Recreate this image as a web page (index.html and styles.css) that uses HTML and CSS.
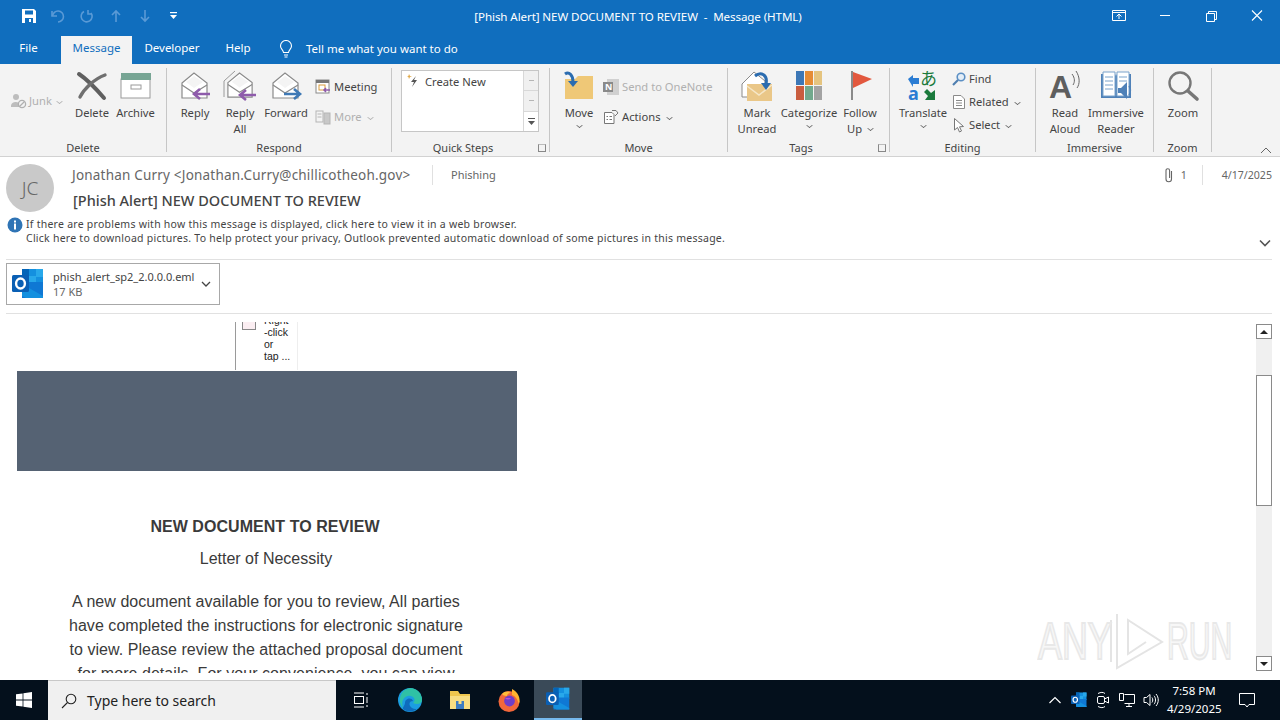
FILE: index.html
```html
<!DOCTYPE html>
<html lang="en">
  <head>
    <meta charset="UTF-8" />
    <meta name="viewport" content="width=device-width, initial-scale=1.0" />
    <title>[Phish Alert] NEW DOCUMENT TO REVIEW - Message (HTML)</title>
    <link rel="stylesheet" href="styles.css">
  </head>
  <body>
    <svg class="defs" width="0" height="0">
      <symbol id="env" viewBox="0 0 32 32">
        <path d="M3 12 L15 2 L28 12 V27 H3 Z" fill="#fff" stroke="#8a8a8a" stroke-width="1.2"/>
        <path d="M3 14 L15 22 L28 14" fill="none" stroke="#8a8a8a" stroke-width="1.2"/>
        <path d="M7 11 L15 5 L24 11 L15 17 Z" fill="#f4f4f4"/>
      </symbol>
      <symbol id="outlook" viewBox="0 0 32 32">
        <rect x="10" y="1" width="21" height="15" fill="#1490df"/>
        <rect x="10" y="1" width="7" height="8" fill="#0364b8"/>
        <rect x="24" y="1" width="7" height="8" fill="#28a8ea"/>
        <rect x="17" y="8" width="7" height="8" fill="#28a8ea"/>
        <path d="M10 14 H31 V30 H10 Z" fill="#0f78d4"/>
        <path d="M10 16 L31 28 V30 H14 L10 28 Z" fill="#1490df"/>
        <rect x="0" y="7" width="17" height="17" rx="1.5" fill="#0a5fb4"/>
        <ellipse cx="8.5" cy="15.5" rx="4.4" ry="5" fill="none" stroke="#fff" stroke-width="2.4"/>
      </symbol>
    </svg>

    <header class="titlebar">
      <div class="qat">
        <svg class="qat-save" width="16" height="16" viewBox="0 0 16 16"><path d="M1 1 H13 L15 3 V15 H1 Z" fill="#fff"/><rect x="4" y="2.5" width="8" height="4" fill="#106ebe"/><rect x="4" y="10" width="8" height="5" fill="#106ebe"/><rect x="8" y="11" width="2" height="3" fill="#fff"/></svg>
        <svg width="16" height="16" viewBox="0 0 16 16" fill="none" stroke="#5a9ad6" stroke-width="1.6"><path d="M2 3 V8 H7"/><path d="M2.5 8 A5.5 5.5 0 1 1 8 14"/></svg>
        <svg width="16" height="16" viewBox="0 0 16 16" fill="none" stroke="#5a9ad6" stroke-width="1.6"><path d="M9 2 V6 H13"/><path d="M12 5 A5.5 5.5 0 1 1 5 3.5"/></svg>
        <svg width="16" height="16" viewBox="0 0 16 16" fill="none" stroke="#5a9ad6" stroke-width="1.6"><path d="M8 14 V3 M4 7 L8 3 L12 7"/></svg>
        <svg width="16" height="16" viewBox="0 0 16 16" fill="none" stroke="#5a9ad6" stroke-width="1.6"><path d="M8 2 V13 M4 9 L8 13 L12 9"/></svg>
        <svg width="16" height="16" viewBox="0 0 16 16" fill="#fff"><rect x="4" y="4" width="7" height="1.2"/><path d="M4 7 H11 L7.5 11 Z"/></svg>
      </div>
      <div class="title">[Phish Alert] NEW DOCUMENT TO REVIEW &nbsp;-&nbsp; Message (HTML)</div>
      <div class="winbtns">
        <svg width="46" height="14" viewBox="0 0 46 14" fill="none" stroke="#fff"><path d="M16.5 1.5 H29.5 V11.5 H16.5 Z"/><path d="M16.5 3.5 H29.5"/><path d="M23 10 V5.5 M20.5 7.5 L23 5 L25.5 7.5"/></svg>
        <svg width="46" height="14" viewBox="0 0 46 14" fill="none" stroke="#fff"><path d="M18 6.5 H28"/></svg>
        <svg width="46" height="14" viewBox="0 0 46 14" fill="none" stroke="#fff"><path d="M18.5 4.5 H26.5 V12.5 H18.5 Z"/><path d="M20.5 4.5 V2.5 H28.5 V10.5 H26.5"/></svg>
        <svg width="46" height="14" viewBox="0 0 46 14" fill="none" stroke="#fff" stroke-width="1.1"><path d="M18 1.5 L28 11.5 M28 1.5 L18 11.5"/></svg>
      </div>
    </header>

    <nav class="tabs">
      <span class="tab tab-file">File</span>
      <span class="tab tab-active">Message</span>
      <span class="tab tab-dev">Developer</span>
      <span class="tab tab-help">Help</span>
      <svg class="bulb" width="16" height="18" viewBox="0 0 16 18" fill="none" stroke="#fff" stroke-width="1.1"><path d="M5.5 12.5 C5 9.5 2.5 9 2.5 6 A5.5 5.5 0 0 1 13.5 6 C13.5 9 11 9.5 10.5 12.5 Z"/><path d="M6 15 H10 M6.5 17 H9.5"/></svg>
      <span class="tell">Tell me what you want to do</span>
    </nav>

    <section class="ribbon">
      <div class="group g-delete">
        <div class="group-body">
          <div class="junk">
            <svg width="16" height="16" viewBox="0 0 16 16"><circle cx="5" cy="4" r="3" fill="#bdbdbd"/><path d="M0 13 C0 8 9 8 9 12 V14 H0 Z" fill="#bdbdbd"/><circle cx="11" cy="11" r="3.6" fill="#f3f3f3" stroke="#b0b0b0" stroke-width="1.3"/><path d="M8.5 13.5 L13.5 8.5" stroke="#b0b0b0" stroke-width="1.3"/></svg>
            <span>Junk</span><i class="caret caret-dim"></i>
          </div>
          <div class="big w-delete">
            <svg class="big-icon" width="32" height="32" viewBox="0 0 32 32" fill="none" stroke-linecap="round"><path d="M3 3 C12 9 22 20 28 27" stroke="#5f5f5f" stroke-width="4"/><path d="M29 4 C18 8 8 18 4 26" stroke="#6f6f6f" stroke-width="3.4"/></svg>
            <span>Delete</span>
          </div>
          <div class="big w-archive">
            <svg class="big-icon" width="32" height="32" viewBox="0 0 32 32"><rect x="1" y="8" width="29" height="19" fill="#fff" stroke="#9a9a9a"/><rect x="1" y="2" width="30" height="7" fill="#77a594"/><rect x="11" y="14" width="10" height="4" fill="none" stroke="#9a9a9a"/></svg>
            <span>Archive</span>
          </div>
        </div>
        <div class="group-label">Delete</div>
      </div>

      <div class="group g-respond">
        <div class="group-body">
          <div class="big w-reply">
            <svg class="big-icon" width="32" height="32"><use href="#env"/><path d="M31 23 H16 M21 18 L15 23 L21 28" fill="none" stroke="#8e5bab" stroke-width="2.6"/></svg>
            <span>Reply</span>
          </div>
          <div class="big w-replyall">
            <svg class="big-icon" width="32" height="32" viewBox="0 0 32 32"><path d="M0 10 L11 0 M0 10 V26" fill="none" stroke="#9a9a9a"/><svg x="1" y="0" width="31" height="31"><use href="#env"/></svg><path d="M32 24 H17 M22 19 L16 24 L22 29" fill="none" stroke="#8e5bab" stroke-width="2.6"/></svg>
            <span>Reply<br>All</span>
          </div>
          <div class="big w-forward">
            <svg class="big-icon" width="32" height="32"><use href="#env"/><path d="M14 23 H29 M24 18 L30 23 L24 28" fill="none" stroke="#3f79b5" stroke-width="2.6"/></svg>
            <span>Forward</span>
          </div>
          <div class="stack stack-respond">
            <div class="small">
              <svg width="16" height="16" viewBox="0 0 16 16"><rect x="1" y="1" width="13" height="13" fill="#fff" stroke="#8a8a8a"/><rect x="1" y="1" width="13" height="3" fill="#777"/><rect x="4" y="6" width="6" height="5" fill="none" stroke="#d99b3a"/><path d="M15 11 H9 M11 9 L9 11 L11 13" stroke="#8e5bab" stroke-width="1.5" fill="none"/></svg>
              <span>Meeting</span>
            </div>
            <div class="small dim">
              <svg width="16" height="16" viewBox="0 0 16 16" fill="none" stroke="#b5b5b5"><rect x="1" y="2" width="7" height="11"/><path d="M2.5 5 H6.5 M2.5 8 H6.5"/><rect x="9" y="4" width="6" height="11" fill="#c8c8c8"/></svg>
              <span>More</span><i class="caret caret-dim"></i>
            </div>
          </div>
        </div>
        <div class="group-label">Respond</div>
      </div>

      <div class="group g-quick">
        <div class="group-body">
          <div class="quick">
            <div class="quick-list">
              <svg width="14" height="14" viewBox="0 0 14 14"><path d="M9 2 L4 8 H7 L5 13 L10 6 H7 Z" fill="#555"/><path d="M2 0 L3 2 L5 2.5 L3 3 L2 5 L1.4 3 L0 2.5 L1.4 2 Z" fill="#e0a94a"/></svg>
              <span>Create New</span>
            </div>
            <div class="quick-arrows">
              <b class="qa"><i class="mini-up"></i></b>
              <b class="qa"><i class="mini-down"></i></b>
              <b class="qa qa-last"><svg width="9" height="9" viewBox="0 0 9 9" fill="#555"><rect x="1" y="1" width="7" height="1"/><path d="M1 4 H8 L4.5 8 Z"/></svg></b>
            </div>
          </div>
        </div>
        <div class="group-label label-launch">Quick Steps<i class="launcher"></i></div>
      </div>

      <div class="group g-move">
        <div class="group-body">
          <div class="big w-move">
            <svg class="big-icon" width="32" height="32" viewBox="0 0 32 32"><path d="M2 8 H12 L15 5 H30 V28 H2 Z" fill="#efc877"/><path d="M2 3 C6 0 10 4 10 11" fill="none" stroke="#2b6cb0" stroke-width="3"/><path d="M5 10 L10 16 L15 10 Z" fill="#2b6cb0"/></svg>
            <span>Move</span>
            <i class="caret"></i>
          </div>
          <div class="stack stack-move">
            <div class="small dim">
              <svg width="16" height="16" viewBox="0 0 16 16"><rect x="4" y="0" width="12" height="16" fill="#d0d0d0"/><rect x="0" y="3" width="10" height="10" fill="#8a8a8a"/><text class="n-glyph" x="2" y="11">N</text></svg>
              <span>Send to OneNote</span>
            </div>
            <div class="small">
              <svg width="16" height="16" viewBox="0 0 16 16" fill="none" stroke="#777"><path d="M1.5 3.5 H9 L11 5.5 V14.5 H1.5 Z" fill="#fff"/><path d="M3.5 7.5 H5 M6.5 7.5 H9 M3.5 10.5 H5 M6.5 10.5 H9"/><path d="M9 1.5 H13 L15 4 L12 7"/></svg>
              <span>Actions</span><i class="caret"></i>
            </div>
          </div>
        </div>
        <div class="group-label">Move</div>
      </div>

      <div class="group g-tags">
        <div class="group-body">
          <div class="big w-unread">
            <svg class="big-icon" width="32" height="32" viewBox="0 0 32 32"><path d="M1 13 L13 1 L24 10 V26 H1 Z" fill="#fff" stroke="#8a8a8a"/><path d="M7 15 H32 V32 H7 Z" transform="translate(-1 -2)" fill="#eac788"/><path d="M6 15 L18 24 L31 14" fill="none" stroke="#f6e7c8" stroke-width="1.5"/><path d="M14 5 C20 0 27 4 25 13" fill="none" stroke="#2b6cb0" stroke-width="3"/><path d="M20 12 L25 19 L30 12 Z" fill="#2b6cb0"/></svg>
            <span>Mark<br>Unread</span>
          </div>
          <div class="big w-categorize">
            <svg class="big-icon" width="32" height="32" viewBox="0 0 32 32"><rect x="3" y="0" width="8" height="14" fill="#3c77b6"/><rect x="12" y="0" width="8" height="14" fill="#e58c35"/><rect x="21" y="0" width="8" height="14" fill="#e5c47f"/><rect x="3" y="15" width="8" height="14" fill="#c95d3f"/><rect x="12" y="15" width="8" height="14" fill="#72a98d"/><rect x="21" y="15" width="8" height="14" fill="#a3a3a3"/></svg>
            <span>Categorize</span>
            <i class="caret"></i>
          </div>
          <div class="big w-follow">
            <svg class="big-icon" width="32" height="32" viewBox="0 0 32 32"><rect x="7" y="0" width="2" height="29" fill="#8a8a8a"/><path d="M9 1 L28 8 L9 17 Z" fill="#e2583e"/></svg>
            <span>Follow<br>Up <i class="caret caret-inline"></i></span>
          </div>
        </div>
        <div class="group-label label-launch">Tags<i class="launcher"></i></div>
      </div>

      <div class="group g-editing">
        <div class="group-body">
          <div class="big w-translate">
            <svg class="big-icon" width="32" height="32" viewBox="0 0 32 32"><path d="M1 8 L6 4 V7 H12 V13 H6 V16 Z" fill="#2b7cd3"/><text class="tr-a" x="1" y="29">a</text><text class="tr-j" x="13" y="14">あ</text><path d="M28 29 L28 19 L24 22 L20 18 L17 21 L21 25 L18 29 Z" fill="#1b7a3c"/></svg>
            <span>Translate</span>
            <i class="caret"></i>
          </div>
          <div class="stack stack-edit">
            <div class="small">
              <svg width="14" height="14" viewBox="0 0 14 14" fill="none"><circle cx="9" cy="5" r="3.8" stroke="#5b8fc4" stroke-width="1.6" fill="#e4eef8"/><path d="M6 8 L1 13" stroke="#4f7fb0" stroke-width="2.2"/></svg>
              <span>Find</span>
            </div>
            <div class="small">
              <svg width="14" height="16" viewBox="0 0 14 16" fill="#fff" stroke="#8a8a8a"><path d="M1.5 1.5 H9 L12.5 5 V14.5 H1.5 Z"/><path d="M4 6.5 H10 M4 9 H10 M4 11.5 H10" fill="none"/></svg>
              <span>Related</span><i class="caret"></i>
            </div>
            <div class="small">
              <svg width="14" height="16" viewBox="0 0 14 16" fill="#fff" stroke="#777"><path d="M2.5 1.5 V13 L5.5 10.5 L7.5 15 L9.5 14 L7.5 9.8 L11.5 9.5 Z"/></svg>
              <span>Select</span><i class="caret"></i>
            </div>
          </div>
        </div>
        <div class="group-label">Editing</div>
      </div>

      <div class="group g-immersive">
        <div class="group-body">
          <div class="big w-read">
            <svg class="big-icon" width="32" height="32" viewBox="0 0 32 32"><text class="read-a" x="0" y="27">A</text><path d="M23 3 C26 7 26 11 24 14 M27 0 C31 6 31 13 28 17" fill="none" stroke="#666"/></svg>
            <span>Read<br>Aloud</span>
          </div>
          <div class="big w-immersive">
            <svg class="big-icon" width="32" height="32" viewBox="0 0 32 32"><path d="M1 3 H15 L16 5 L17 3 H31 V27 H1 Z" fill="#4f81b8"/><path d="M3 1 H15 V25 H3 Z M17 1 H29 V25 H17 Z" fill="#fff" stroke="#7ba3cc"/><path d="M5 6 H13 M5 10 H13 M5 14 H13 M5 18 H13 M19 6 H27 M19 10 H27" stroke="#7ba3cc"/><path d="M18 17 H21 L27 11 V28 L21 22 H18 Z" fill="#4f81b8"/><path d="M29 15 C31 18 31 21 29 24" fill="none" stroke="#4f81b8" stroke-width="1.4"/></svg>
            <span>Immersive<br>Reader</span>
          </div>
        </div>
        <div class="group-label">Immersive</div>
      </div>

      <div class="group g-zoom">
        <div class="group-body">
          <div class="big w-zoom">
            <svg class="big-icon" width="32" height="32" viewBox="0 0 32 32" fill="none" stroke="#777"><circle cx="13" cy="12" r="10.5" stroke-width="2.4"/><path d="M21 20 L30 28" stroke-width="3.6" stroke-linecap="round"/></svg>
            <span>Zoom</span>
          </div>
        </div>
        <div class="group-label">Zoom</div>
      </div>

      <svg class="collapse" width="14" height="8" viewBox="0 0 14 8" fill="none" stroke="#666"><path d="M2 7 L7 2 L12 7"/></svg>
    </section>

    <section class="msg-head">
      <div class="avatar">JC</div>
      <div class="head-main">
        <div class="head-row">
          <span class="sender">Jonathan Curry &lt;Jonathan.Curry@chillicotheoh.gov&gt;</span>
          <span class="tag">Phishing</span>
          <span class="head-right">
            <svg width="10" height="16" viewBox="0 0 10 16" fill="none" stroke="#666" stroke-width="1.1"><path d="M7.5 4 V12 A2.7 2.7 0 0 1 2 12 V3.5 A1.8 1.8 0 0 1 5.6 3.5 V11"/></svg>
            <span class="att-count">1</span>
            <span class="head-date">4/17/2025</span>
          </span>
        </div>
        <div class="subject">[Phish Alert] NEW DOCUMENT TO REVIEW</div>
      </div>
    </section>

    <section class="infobar">
      <svg class="info-icon" width="16" height="16" viewBox="0 0 16 16"><circle cx="8" cy="8" r="7.5" fill="#2f74b5"/><rect x="7" y="6.5" width="2" height="6" fill="#fff"/><rect x="7" y="3.5" width="2" height="2" fill="#fff"/></svg>
      <p class="info-text">If there are problems with how this message is displayed, click here to view it in a web browser.<br>Click here to download pictures. To help protect your privacy, Outlook prevented automatic download of some pictures in this message.</p>
      <svg class="info-chevron" width="12" height="8" viewBox="0 0 12 8" fill="none" stroke="#555" stroke-width="1.6"><path d="M1 1.5 L6 6.5 L11 1.5"/></svg>
    </section>

    <section class="attach-row">
      <div class="attach">
        <svg width="32" height="32"><use href="#outlook"/></svg>
        <div class="attach-text">
          <div class="attach-name">phish_alert_sp2_2.0.0.0.eml</div>
          <div class="attach-size">17 KB</div>
        </div>
        <svg class="attach-chevron" width="10" height="6" viewBox="0 0 10 6" fill="none" stroke="#444" stroke-width="1.3"><path d="M1 1 L5 5 L9 1"/></svg>
      </div>
    </section>

    <main class="body-wrap">
      <div class="mail">
        <div class="broken">
          <div class="broken-box">
            <i class="broken-icon"></i>
            <div class="broken-text">Right<br>-click<br>or<br>tap ...</div>
          </div>
        </div>
        <div class="banner"></div>
        <h1 class="mail-title">NEW DOCUMENT TO REVIEW</h1>
        <p class="mail-sub">Letter of Necessity</p>
        <p class="mail-text">A new document available for you to review, All parties<br>have completed the instructions for electronic signature<br>to view. Please review the attached proposal document<br>for more details. For your convenience, you can view</p>
      </div>
      <div class="scrollbar">
        <div class="sb-btn"><i class="sb-up"></i></div>
        <div class="sb-track-top"></div>
        <div class="sb-thumb"></div>
        <div class="sb-track"></div>
        <div class="sb-btn"><i class="sb-down"></i></div>
      </div>
      <div class="watermark">
        <span class="wm-any">ANY</span>
        <svg width="58" height="62" viewBox="0 0 58 62" fill="none" stroke="#e4e4e4" stroke-width="2"><path d="M3 10 V52 M9 4 V58 L54 32 L20 10 V44 L38 32"/></svg>
        <span class="wm-run">RUN</span>
      </div>
    </main>

    <footer class="taskbar">
      <div class="start">
        <svg width="16" height="16" viewBox="0 0 16 16" fill="#fff"><path d="M0 2.3 L6.6 1.4 V7.6 H0 Z M7.4 1.3 L16 0 V7.6 H7.4 Z M0 8.4 H6.6 V14.6 L0 13.7 Z M7.4 8.4 H16 V16 L7.4 14.7 Z"/></svg>
      </div>
      <div class="search">
        <svg width="16" height="16" viewBox="0 0 16 16" fill="none" stroke="#222" stroke-width="1.1"><circle cx="10" cy="6" r="4.8"/><path d="M6.5 9.5 L1 15"/></svg>
        <span>Type here to search</span>
      </div>
      <div class="task-icon">
        <svg width="16" height="16" viewBox="0 0 16 16" fill="none" stroke="#fff"><path d="M1 1 H11 M1 15 H11"/><rect x="1.5" y="4.5" width="9" height="7"/><path d="M14 1 V3 M14 5 V11 M14 13 V15"/></svg>
      </div>
      <div class="task-icon">
        <svg width="24" height="24" viewBox="0 0 24 24"><circle cx="12" cy="12" r="12" fill="#1b9de2"/><path d="M12 0 A12 12 0 0 1 24 12 C24 16 19 17 15 15 C19 12 15 7 10 8 C5 9 3 14 5 20 A12 12 0 0 1 12 0 Z" fill="#2fc1a5"/><path d="M7 15 C7 10 14 9 15 13 C11 13 10 17 14 20 C17 22 20 21 21 19 A12 12 0 0 1 6 22 C3 20 7 18 7 15 Z" fill="#0f6cbd"/></svg>
      </div>
      <div class="task-icon">
        <svg width="22" height="20" viewBox="0 0 22 20"><path d="M1 1 H9 L11 4 H21 V19 H1 Z" fill="#f0c64e"/><rect x="1" y="6" width="20" height="13" fill="#f9dd82"/><rect x="7" y="11" width="8" height="8" fill="#3e7cc2"/><rect x="9.5" y="11" width="3" height="3" fill="#f9dd82"/></svg>
      </div>
      <div class="task-icon">
        <svg width="24" height="24" viewBox="0 0 24 24"><circle cx="12" cy="13.5" r="10.5" fill="#f2673a"/><path d="M15 1 C21 4 24 10 22 16 C20 10 18 8 15 7 Z" fill="#ffb52e"/><path d="M5 6 C8 3 12 3 14 5 C11 5 10 7 10 8 C7 8 6 7 5 6 Z" fill="#ffbd3a"/><circle cx="12.5" cy="13" r="5.4" fill="#6f3ec8"/><path d="M8 10 H14 C12 12 10 12 8 10 Z" fill="#c14fd0"/></svg>
      </div>
      <div class="task-icon task-active">
        <svg width="24" height="24"><use href="#outlook"/></svg>
      </div>
      <div class="tray">
        <svg class="t-caret" width="14" height="8" viewBox="0 0 14 8" fill="none" stroke="#fff" stroke-width="1.2"><path d="M1.5 7 L7 1.5 L12.5 7"/></svg>
        <svg class="t-ico" width="16" height="16"><use href="#outlook"/></svg>
        <svg class="t-ico" width="16" height="18" viewBox="0 0 16 18" fill="none" stroke="#fff"><rect x="2.5" y="5.5" width="7" height="7" rx="1.5"/><path d="M9.5 8 L13.5 6 V12 L9.5 10"/><path d="M3 2.5 C6 1 8 1 10 2.5 M3 15.5 C6 17 8 17 10 15.5"/></svg>
        <svg class="t-ico" width="16" height="16" viewBox="0 0 16 16" fill="none" stroke="#fff"><path d="M5.5 2.5 H15.5 V11.5 H5.5 M10 11.5 V14.5 M7 14.5 H13"/><path d="M0.5 1.5 H4.5 V8.5 H0.5 Z" fill="#04101c"/></svg>
        <svg class="t-ico" width="16" height="16" viewBox="0 0 16 16" fill="none" stroke="#fff"><path d="M1 5.5 H3.5 L7 2.5 V13.5 L3.5 10.5 H1 Z"/><path d="M9 5.5 C10 7 10 9 9 10.5 M11 3.8 C13 6 13 10 11 12.2 M13 2 C16 5.5 16 10.5 13 14"/></svg>
        <div class="clock">7:58 PM<br>4/29/2025</div>
        <svg class="t-note" width="16" height="16" viewBox="0 0 16 16" fill="none" stroke="#fff"><path d="M0.5 1.5 H15.5 V12.5 H10 L8 15 L6 12.5 H0.5 Z"/></svg>
      </div>
    </footer>
  </body>
</html>
```

FILE: styles.css
```css
* {
  box-sizing: border-box;
}

html,
body {
  margin: 0;
  height: 720px;
  overflow: hidden;
}

body {
  display: flex;
  flex-direction: column;
  background-color: white;
  font-family: "Noto Sans", "Open Sans", sans-serif;
  font-size: 12px;
  color: #444;
}

.defs {
  position: absolute;
}

i {
  font-style: normal;
}

/* title bar */
.titlebar {
  height: 36px;
  flex: none;
  display: flex;
  align-items: center;
  padding-bottom: 4px;
  background-color: #106ebe;
  color: white;
}

.qat {
  width: 300px;
  display: flex;
  align-items: center;
  gap: 13px;
  padding-left: 21px;
}

.title {
  width: 676px;
  text-align: center;
  font-size: 11.6px;
  letter-spacing: -0.1px;
}

.winbtns {
  flex: 1;
  display: flex;
  justify-content: flex-end;
}

/* tabs */
.tabs {
  height: 28px;
  flex: none;
  display: flex;
  align-items: center;
  background-color: #106ebe;
  color: white;
  font-size: 11.5px;
}

.tab {
  height: 28px;
  line-height: 24px;
  text-align: center;
}

.tab-file {
  width: 61px;
  padding-right: 4px;
}

.tab-active {
  width: 71px;
  background-color: #f3f3f3;
  color: #106ebe;
}

.tab-dev {
  width: 80px;
}

.tab-help {
  width: 52px;
}

.bulb {
  margin-left: 14px;
  margin-bottom: 3px;
}

.tell {
  margin-left: 12px;
  margin-bottom: 4px;
}

/* ribbon */
.ribbon {
  height: 93px;
  flex: none;
  position: relative;
  display: flex;
  padding-top: 4px;
  background-color: #f3f3f3;
  border-bottom: 1px solid #d2d2d2;
  font-size: 11.2px;
  line-height: 16px;
  color: #444;
}

.group {
  height: 84px;
  flex: none;
  display: flex;
  flex-direction: column;
  border-right: 1px solid #c6c6c6;
}

.group-body {
  flex: 1;
  display: flex;
  min-height: 0;
}

.group-label {
  height: 16px;
  margin-bottom: -4px;
  position: relative;
  text-align: center;
  font-size: 11px;
  line-height: 15px;
}

.label-launch {
  padding-right: 15px;
}

.g-delete { width: 167px; }
.g-respond { width: 225px; }
.g-quick { width: 158px; }
.g-move { width: 178px; }
.g-tags { width: 162px; }
.g-editing { width: 146px; }
.g-immersive { width: 118px; }
.g-zoom { width: 58px; }

.big {
  display: flex;
  flex-direction: column;
  align-items: center;
  flex: none;
  padding-top: 3px;
  text-align: center;
  white-space: nowrap;
}

.big-icon {
  height: 32px;
  width: 32px;
  margin-bottom: 2px;
  flex: none;
  overflow: visible;
}

.big > .caret {
  margin: 2px 0 0;
}

.w-delete { width: 42px; }
.w-archive { width: 45px; }
.w-reply { width: 44px; margin-left: 6px; }
.w-replyall { width: 44px; margin-left: 1px; }
.w-forward { width: 48px; }
.w-move { width: 42px; margin-left: 8px; }
.w-unread { width: 48px; margin-left: 5px; }
.w-categorize { width: 56px; }
.w-follow { width: 46px; }
.w-translate { width: 52px; margin-left: 7px; }
.w-read { width: 44px; margin-left: 7px; }
.w-immersive { width: 58px; }
.w-zoom { width: 40px; margin-left: 9px; }

.junk {
  width: 60px;
  margin-left: 11px;
  margin-top: 25px;
  height: 16px;
  display: flex;
  align-items: center;
  gap: 2px;
  color: #b0b0b0;
}

.stack {
  display: flex;
  flex-direction: column;
}

.stack-respond {
  margin-left: 5px;
  margin-top: 11px;
  gap: 14px;
}

.stack-move {
  margin-left: 3px;
  margin-top: 11px;
  gap: 14px;
}

.stack-edit {
  margin-left: 3px;
  margin-top: 3px;
  gap: 7px;
}

.small {
  height: 16px;
  display: flex;
  align-items: center;
  gap: 3px;
  white-space: nowrap;
}

.dim {
  color: #b0b0b0;
}

.caret {
  display: inline-block;
  width: 5px;
  height: 5px;
  margin-left: 3px;
  border-right: 1px solid #666;
  border-bottom: 1px solid #666;
  transform: scale(0.9, 0.7) rotate(45deg);
}

.caret-dim {
  border-color: #b0b0b0;
}

.caret-inline {
  margin-bottom: 2px;
}

.launcher {
  position: absolute;
  right: 3px;
  top: 4px;
  width: 8px;
  height: 8px;
  border: 1px solid #888;
  border-top-color: #bbb;
  border-right-color: #888;
}

.collapse {
  position: absolute;
  right: 7px;
  bottom: 2px;
}

/* quick steps */
.quick {
  width: 138px;
  height: 62px;
  margin: 2px 0 0 9px;
  display: flex;
  background-color: white;
  border: 1px solid #c6c6c6;
}

.quick-list {
  flex: 1;
  display: flex;
  align-items: flex-start;
  gap: 4px;
  padding: 3px 0 0 5px;
}

.quick-arrows {
  width: 15px;
  display: flex;
  flex-direction: column;
  border-left: 1px solid #d8d8d8;
}

.qa {
  flex: 1;
  display: flex;
  align-items: center;
  justify-content: center;
  background-color: #f0f0f0;
  border-bottom: 1px solid #d8d8d8;
}

.qa-last {
  background-color: white;
  border-bottom: none;
}

.mini-up,
.mini-down {
  width: 5px;
  height: 1px;
  background-color: #b5b5b5;
}

.n-glyph {
  font-size: 9px;
  font-weight: bold;
  fill: white;
}

.tr-a {
  font-size: 18px;
  font-weight: bold;
  fill: #2b7cd3;
}

.tr-j {
  font-family: "Noto Sans CJK JP", sans-serif;
  font-size: 17px;
  fill: #1b7a3c;
}

.read-a {
  font-family: "Liberation Sans", sans-serif;
  font-size: 32px;
  font-weight: bold;
  fill: #5e5e5e;
}

/* message header */
.msg-head {
  height: 60px;
  flex: none;
  display: flex;
  padding: 7px 8px 0 6px;
}

.avatar {
  width: 48px;
  height: 48px;
  flex: none;
  border-radius: 50%;
  background-color: #c9c9c9;
  color: #666;
  font-size: 19px;
  font-weight: 300;
  line-height: 48px;
  text-align: center;
}

.head-main {
  flex: 1;
  margin-left: 18px;
  padding-top: 1px;
}

.head-row {
  display: flex;
  align-items: center;
  height: 20px;
}

.sender {
  width: 360px;
  font-size: 13.5px;
  color: #666;
  white-space: nowrap;
  letter-spacing: 0.2px;
}

.tag {
  padding-left: 18px;
  border-left: 1px solid #e0e0e0;
  font-size: 11px;
  color: #666;
  line-height: 20px;
}

.head-right {
  margin-left: auto;
  display: flex;
  align-items: center;
  font-size: 10.6px;
  color: #666;
}

.att-count {
  margin-left: 7px;
  width: 21px;
}

.head-date {
  padding-left: 19px;
  border-left: 1px solid #e0e0e0;
  line-height: 20px;
}

.subject {
  margin-top: 5px;
  margin-left: 1px;
  font-size: 14.5px;
  font-weight: 500;
  line-height: 20px;
  color: #444;
}

/* info bar */
.infobar {
  height: 43px;
  flex: none;
  position: relative;
  display: flex;
  margin: 0 8px 0 6px;
  border-bottom: 1px solid #e1e1e1;
}

.info-icon {
  margin: 0 3px 0 1px;
  flex: none;
}

.info-text {
  margin: 0;
  font-size: 10.5px;
  line-height: 14px;
  color: #444;
  letter-spacing: 0.25px;
  white-space: nowrap;
}

.info-chevron {
  position: absolute;
  right: 1px;
  top: 22px;
}

/* attachment */
.attach-row {
  height: 54px;
  flex: none;
  margin: 0 8px 0 6px;
  padding-top: 3px;
  border-bottom: 1px solid #e1e1e1;
}

.attach {
  width: 214px;
  height: 42px;
  display: flex;
  align-items: center;
  padding-left: 5px;
  border: 1px solid #a8a8a8;
  background-color: white;
}

.attach-text {
  margin-left: 9px;
  width: 148px;
  line-height: 15px;
  white-space: nowrap;
}

.attach-name {
  font-size: 11px;
  color: #444;
}

.attach-size {
  font-size: 11px;
  color: #666;
}

/* message body */
.body-wrap {
  flex: 1;
  min-height: 0;
  position: relative;
  display: flex;
  overflow: hidden;
}

.mail {
  width: 1256px;
  height: 359px;
  overflow: hidden;
  padding-left: 17px;
  font-family: "Liberation Sans", Arial, sans-serif;
  color: #3a3a3a;
}

.broken {
  height: 57px;
  overflow: hidden;
}

.broken-box {
  width: 63px;
  height: 48px;
  margin: 8px 0 0 218px;
  position: relative;
  overflow: hidden;
  border-left: 1px solid #9a9a9a;
  border-right: 1px solid #eee;
}

.broken-icon {
  position: absolute;
  left: 6px;
  top: -2px;
  width: 14px;
  height: 10px;
  border: 1px solid #888;
  background-color: #fbeef2;
}

.broken-text {
  margin-top: -8px;
  padding-left: 28px;
  font-size: 10.5px;
  line-height: 12px;
  color: #222;
}

.banner {
  width: 500px;
  height: 100px;
  background-color: #556273;
}

.mail-title {
  width: 496px;
  margin: 47px 0 0;
  font-size: 16px;
  line-height: 18px;
  font-weight: bold;
  letter-spacing: 0.05px;
  text-align: center;
}

.mail-sub {
  width: 498px;
  margin: 14px 0 0;
  font-size: 16px;
  line-height: 18px;
  text-align: center;
}

.mail-text {
  width: 498px;
  margin: 22px 0 0;
  font-size: 16px;
  line-height: 24px;
  letter-spacing: 0.05px;
  text-align: center;
}

/* scrollbar */
.scrollbar {
  width: 16px;
  height: 347px;
  margin-top: 10px;
  flex: none;
  display: flex;
  flex-direction: column;
  background-color: #f0f0f0;
}

.sb-btn {
  height: 15px;
  flex: none;
  display: flex;
  align-items: center;
  justify-content: center;
  background-color: white;
  border: 1px solid #8a8a8a;
}

.sb-up,
.sb-down {
  width: 0;
  height: 0;
  border-left: 4px solid transparent;
  border-right: 4px solid transparent;
}

.sb-up {
  border-bottom: 4px solid #222;
}

.sb-down {
  border-top: 4px solid #222;
}

.sb-track-top {
  height: 36px;
  flex: none;
}

.sb-thumb {
  height: 131px;
  flex: none;
  background-color: white;
  border: 1px solid #8a8a8a;
}

.sb-track {
  flex: 1;
}

.watermark {
  position: absolute;
  left: 1038px;
  top: 296px;
  display: flex;
  align-items: center;
  font-family: "Liberation Sans", Arial, sans-serif;
  font-size: 52px;
  line-height: 62px;
  color: rgba(240, 240, 240, 0.5);
  -webkit-text-stroke: 2px #e8e8e8;
  pointer-events: none;
}

.wm-any,
.wm-run {
  display: block;
  white-space: nowrap;
  transform-origin: left center;
}

.wm-any {
  width: 70px;
  transform: scaleX(0.69);
}

.wm-run {
  width: 65px;
  margin-left: 1px;
  transform: scaleX(0.58);
}

/* taskbar */
.taskbar {
  height: 40px;
  flex: none;
  display: flex;
  align-items: center;
  background-color: #04101c;
  color: white;
}

.start {
  width: 48px;
  display: flex;
  justify-content: center;
}

.search {
  width: 288px;
  height: 40px;
  display: flex;
  align-items: center;
  gap: 10px;
  padding-left: 13px;
  background-color: #f0f0f0;
  border-top: 1px solid #c8c8c8;
  color: #222;
  font-size: 14px;
}

.task-icon {
  width: 49.5px;
  height: 40px;
  display: flex;
  align-items: center;
  justify-content: center;
}

.task-active {
  width: 48px;
  background-color: #3a4a58;
  border-bottom: 2px solid #76b9ed;
}

.tray {
  flex: 1;
  height: 40px;
  display: flex;
  align-items: center;
  padding-left: 466px;
}

.t-caret {
  margin-right: 9px;
}

.t-ico {
  margin-right: 8px;
}

.clock {
  width: 54px;
  font-size: 11.5px;
  line-height: 18px;
  text-align: center;
  white-space: nowrap;
}

.t-note {
  margin-left: 18px;
}
```
